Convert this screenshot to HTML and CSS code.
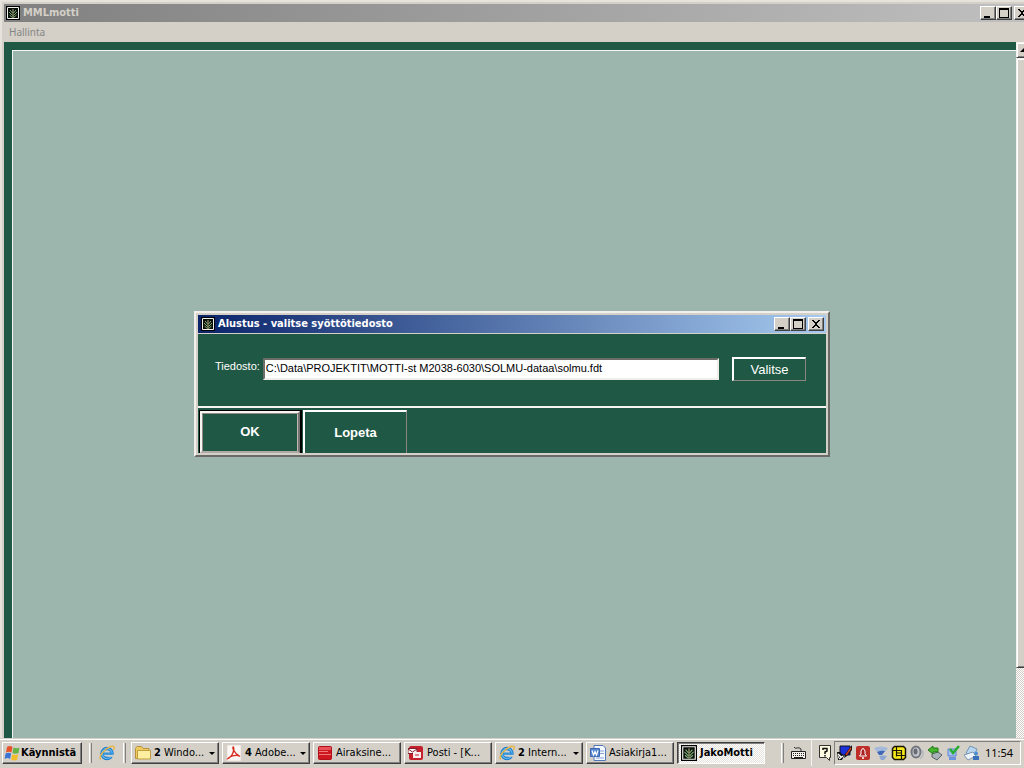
FILE: index.html
```html
<!DOCTYPE html>
<html lang="fi">
<head>
<meta charset="utf-8">
<title>MMLmotti</title>
<meta name="viewport" content="width=device-width, initial-scale=1">
<link rel="stylesheet" href="styles.css">
</head>
<body>
<svg class="defs" aria-hidden="true">
  <symbol id="leaf" viewBox="0 0 14 14">
    <path d="M0 0h14v14H0z" fill="#000"/>
    <path d="M1.500 1.500h11v11h-11z" fill="#0a0f0a" stroke="#f0f0ea"/>
    <path d="M7 3v9" stroke="#b0a878"/>
    <path d="M4 4l2.500 3M10 4L7.500 7M3 6l3.500 3.500M11 6L7.500 9.500M3.500 9L6.500 11.500M10.500 9L7.500 11.500" fill="none" stroke="#7fae78"/>
  </symbol>
  <symbol id="min" viewBox="0 0 10 10"><path d="M1 8h6v2H1z"/></symbol>
  <symbol id="max" viewBox="0 0 10 10"><path d="M0 0h10v10H0zM1 2v7h8V2z" fill-rule="evenodd"/></symbol>
  <symbol id="close" viewBox="0 0 10 10"><path d="M1 1h2v1h1v1h2V2h1V1h2v1H8v1H7v1H6v2h1v1h1v1h1v1H7V8H6V7H4v1H3v1H1V8h1V7h1V6h1V4H3V3H2V2H1z"/></symbol>
  <symbol id="ie" viewBox="0 0 16 16">
    <circle cx="8" cy="8.500" r="5" fill="none" stroke="#1d78c8" stroke-width="3.400"/>
    <circle cx="8" cy="8.500" r="5" fill="none" stroke="#56b4f0" stroke-width="1.600"/>
    <path d="M9 9.800h7v2H9z" fill="#d4d0c8"/>
    <path d="M4 7.500h9.500v2.300H4z" fill="#2f93e0"/>
    <path d="M2 14.500C-1.500 12 6 3.500 12 1.500c3-1 4 .5 2.500 3.500" fill="none" stroke="#e8b545" stroke-width="1.400"/>
  </symbol>
</svg>

<main class="app">
  <header class="caption caption-idle">
    <svg class="leaf"><use href="#leaf"/></svg>
    <h1 class="caption-text">MMLmotti</h1>
    <div class="caption-buttons">
      <button class="cap" type="button" aria-label="Pienennä"><svg><use href="#min"/></svg></button>
      <button class="cap" type="button" aria-label="Suurenna"><svg><use href="#max"/></svg></button>
      <button class="cap cap-close" type="button" aria-label="Sulje"><svg><use href="#close"/></svg></button>
    </div>
  </header>
  <nav class="menu"><button class="menu-item" type="button">Hallinta</button></nav>
  <div class="content">
    <div class="frame"><div class="canvas"></div></div>
    <div class="scroll">
      <button class="scroll-up" type="button" aria-label="Vieritä ylös"><svg viewBox="0 0 8 4"><path d="M4 0l4 4H0z"/></svg></button>
      <div class="thumb"></div>
    </div>
  </div>
</main>

<footer class="taskbar">
  <button class="task start" type="button">
    <svg class="ico" viewBox="0 0 16 16"><path d="M3 2q3-2 5.500 0L7.500 7.500q-2.500-1.500-5.500 0z" fill="#e9532b"/><path d="M9.500 2.500q3 1.500 6 0l-1 5.500q-3 1.500-6 0z" fill="#65b345"/><path d="M1.600 8.500q3-1.500 5.500 0l-1 5.500q-2.500-2-5.500 0z" fill="#3975d5"/><path d="M8.200 9.200q3 1.500 6 0l-1 5.500q-3 1.500-6 0z" fill="#f4bd2b"/></svg>
    <b>Käynnistä</b>
  </button>
  <span class="sep"></span>
  <button class="quick" type="button" aria-label="Internet Explorer"><svg class="ico"><use href="#ie"/></svg></button>
  <span class="sep"></span>
  <div class="tasks">
    <button class="task" type="button"><svg class="ico" viewBox="0 0 16 16"><path d="M.5 3.500L2 1.500h4.500L8 3.500h6v10H.5z" fill="#f0cc60" stroke="#b8923a"/><path d="M2.500 5.500h13v8.500h-13z" fill="#fdeea0" stroke="#c09c3d"/></svg><span class="name"><b>2</b> Windo...</span><i class="drop"></i></button>
    <button class="task" type="button"><svg class="ico" viewBox="0 0 16 16"><path d="M1 0h14v16H1z" fill="#fbf7f4" stroke="#ddcfc9" stroke-width=".6"/><path d="M2 13.500C5 13 9 6 7.500 2c-1.500-1-1 5 6.500 9.500C11 9 4 11 2 13.500z" fill="none" stroke="#d82d22" stroke-width="1.300"/></svg><span class="name"><b>4</b> Adobe...</span><i class="drop"></i></button>
    <button class="task" type="button"><svg class="ico" viewBox="0 0 16 16"><rect x="1.500" y="1.500" width="13" height="13" rx="1" fill="#cf1720" stroke="#b01018"/><path d="M2 2h12v3H2z" fill="#e8505a"/><path d="M2 6.500h9M2 9.500h12" stroke="#ee7a7a"/></svg><span class="name">Airaksine...</span></button>
    <button class="task" type="button"><svg class="ico" viewBox="0 0 16 16"><rect x="1" y="1" width="14" height="14" rx="2" fill="#c5202c"/><path d="M0 3.500h9v5H0z" fill="#fff" stroke="#812029"/><path d="M0 4l4.500 3L9 4" fill="none" stroke="#812029"/><path d="M5 7h8v6H5z" fill="#f8eeee"/><path d="M7 10h4M10 4h4" stroke="#c5202c"/></svg><span class="name">Posti - [K...</span></button>
    <button class="task" type="button"><svg class="ico"><use href="#ie"/></svg><span class="name"><b>2</b> Intern...</span><i class="drop"></i></button>
    <button class="task" type="button"><svg class="ico" viewBox="0 0 16 16"><path d="M4 .5h9l2.500 2.500v12.500H4z" fill="#f4f8ff" stroke="#5277b8"/><path d="M10 6h4M10 8.500h4M6 13h8" stroke="#83a3d8"/><path d="M.5 3.500h9v8h-9z" fill="#5a88d0" stroke="#3c66af"/><path d="M2 5.500L3.500 10 5 6.500 6.500 10 8 5.500" fill="none" stroke="#fff" stroke-width="1.200"/></svg><span class="name">Asiakirja1...</span></button>
    <button class="task active" type="button"><svg class="ico"><use href="#leaf"/></svg><b class="name">JakoMotti</b></button>
  </div>
  <div class="lang">
    <span class="sep"></span>
    <svg class="keys" viewBox="0 0 17 16"><path d="M4 2q1 2 3 1t4 1v3" fill="none" stroke="#333"/><path d="M1.500 6.500h14v7h-14z" fill="#f4f2ea" stroke="#222"/><path d="M3 8.500h11M3 10.500h11" stroke="#222" stroke-dasharray="1 1"/><path d="M4 12.500h9" stroke="#222"/></svg>
    <span class="line"></span>
    <svg class="help" viewBox="0 0 13 16"><path d="M.5 .5h11v12h-1v3l-3-3h-7z" fill="#fffbe0" stroke="#333"/><path d="M4 5V3.500h4V6L6 7v2M6 10v1.500" fill="none" stroke="#111" stroke-width="1.500"/></svg>
  </div>
  <div class="tray">
    <svg class="ico" viewBox="0 0 16 16"><path d="M3 1h10v9H3z" fill="#1a30d8" stroke="#101020"/><path d="M15 0v5l-5 6-3 2 1-4z" fill="#111"/><path d="M14 3L9 10" stroke="#d33a22" stroke-width="1.500"/><path d="M0 7h3l4 4-2 4H1z" fill="#111"/><path d="M1 9l3 3M2 14l4-3M1 12h1" stroke="#fff" stroke-width="1.500"/></svg>
    <svg class="ico" viewBox="0 0 16 16"><rect x="1" y="1" width="14" height="14" rx="2" fill="#bf2f2a"/><path d="M4.500 11L6 9V6q2-5 4 0v3l1.500 2z" fill="#a82020" stroke="#fff"/><path d="M7 13h2" stroke="#fff" stroke-width="1.500"/></svg>
    <svg class="ico" viewBox="0 0 16 16"><path d="M1 3q7-3 14 0l-3 4q-4-2-8 0z" fill="#a4b9dc"/><path d="M4 7q4-2 8-1l-3 4H6z" fill="#4068b8"/><path d="M6 11q4-1 8 0l-3 4H8z" fill="#8fa8d2"/></svg>
    <svg class="ico" viewBox="0 0 16 16"><path d="M3.500 1.500h9l2 2v9l-2 2h-9l-2-2v-9z" fill="#f8ea18" stroke="#181500" stroke-width="1.500"/><path d="M5.500 2v9.500M10.500 5v9M2 5.500h8.500M5.500 10.500H14M5.500 8h5" fill="none" stroke="#181500" stroke-width="1.200"/></svg>
    <svg class="ico" viewBox="0 0 16 16"><ellipse cx="7" cy="7" rx="4.500" ry="5.500" fill="#c4c6ca" stroke="#74777f" stroke-width="2"/><ellipse cx="6.500" cy="6.500" rx="2" ry="3" fill="#666b76"/><path d="M13 5q3 5-2 9" fill="none" stroke="#b5b8c0" stroke-width="1.500"/></svg>
    <svg class="ico" viewBox="0 0 16 16"><path d="M5 9l6-2 4 3-5 5-5-3z" fill="#a9b1b9" stroke="#596169"/><path d="M1 5l5-4v2h5v4H6v2z" fill="#45b52c" stroke="#23781a"/></svg>
    <svg class="ico" viewBox="0 0 16 16"><path d="M3 4h8v7H3z" fill="#a4c0f4" stroke="#5c82d0"/><path d="M4 13.500h7" stroke="#6d94e0" stroke-width="3"/><path d="M5 4l3 4 6-7" fill="none" stroke="#27ad31" stroke-width="2.500"/></svg>
    <svg class="ico" viewBox="0 0 16 16"><path d="M3 8L7 1l7 3-3 7z" fill="#b9d5ef" stroke="#7195b7"/><path d="M1 10l9-3 3 4-8 4z" fill="#eef3f7" stroke="#7b98b2"/><circle cx="13" cy="8.500" r="2" fill="#4d8ed0"/><path d="M10 11h6v4h-6z" fill="#3972ba"/></svg>
    <time class="clock">11:54</time>
  </div>
</footer>

<div class="overlay">
  <form class="dialog" role="dialog" aria-labelledby="dialog-title">
    <header class="caption caption-live">
      <svg class="leaf"><use href="#leaf"/></svg>
      <h2 class="caption-text" id="dialog-title">Alustus - valitse syöttötiedosto</h2>
      <div class="caption-buttons">
        <button class="cap" type="button" aria-label="Pienennä"><svg><use href="#min"/></svg></button>
        <button class="cap" type="button" aria-label="Suurenna"><svg><use href="#max"/></svg></button>
        <button class="cap cap-close" type="button" aria-label="Sulje"><svg><use href="#close"/></svg></button>
      </div>
    </header>
    <div class="fields">
      <label class="label" for="file">Tiedosto:</label>
      <input class="file" id="file" type="text" value="C:\Data\PROJEKTIT\MOTTI-st M2038-6030\SOLMU-dataa\solmu.fdt">
      <button class="pick" type="button">Valitse</button>
    </div>
    <div class="actions">
      <button class="action ok" type="submit"><span class="ok-face">OK</span></button>
      <button class="action quit" type="button">Lopeta</button>
    </div>
  </form>
</div>
</body>
</html>
```
FILE: styles.css
```css
:root {
  --face: #d4d0c8;
  --green: #1f5844;
  --sage: #9db6ad;
  --shade: #808080;
  --dark: #404040;
}

* { box-sizing: border-box; }

body {
  margin: 0;
  height: 100vh;
  overflow: hidden;
  display: flex;
  flex-direction: column;
  background: var(--face);
  color: #000;
  font: 11px/14px "DejaVu Sans Condensed", "DejaVu Sans", sans-serif;
}

button, input { font: inherit; color: inherit; margin: 0; border-radius: 0; }
button { padding: 0; border: 0; background: none; }
svg { display: block; flex: none; }
.defs { width: 0; height: 0; position: absolute; }

/* The maximised window runs past the right edge of the screen */
.app {
  flex: 1;
  min-height: 0;
  width: calc(100% + 12px);
  display: flex;
  flex-direction: column;
  padding: 2px 4px 0 2px;
  border-left: 2px solid #e6e3dd;
  border-top: 2px solid #e6e3dd;
}

.caption { display: flex; align-items: center; gap: 3px; height: 18px; padding: 0 2px 0 3px; flex: none; }
.caption-idle { padding-left: 2px; background: linear-gradient(90deg, #808080, #c0c0c0); color: var(--face); }
.caption-live { background: linear-gradient(90deg, #0a246a, #a6caf0); color: #fff; }
.leaf { width: 14px; height: 14px; }
.caption-text { margin: 0; flex: 1; font-size: 11px; line-height: 14px; font-weight: bold; white-space: nowrap; }
.caption-buttons { display: flex; }

.cap {
  width: 16px;
  height: 14px;
  display: grid;
  place-items: center;
  background: var(--face);
  border: 1px solid;
  border-color: #fff var(--dark) var(--dark) #fff;
  box-shadow: inset -1px -1px var(--shade);
}
.cap svg { width: 10px; height: 10px; }
.cap-close { margin-left: 2px; }

.menu { height: 20px; flex: none; padding: 3px 5px; }
.menu-item { color: #858585; font-family: "Noto Sans", sans-serif; font-size: 10px; line-height: 14px; display: block; }

.content { flex: 1; min-height: 0; display: flex; }
.frame { flex: 1; display: flex; padding: 8px 0 0 8px; background: var(--green); }
.canvas { flex: 1; background: var(--sage); border-left: 1px solid #f4f8f4; border-top: 1px solid #f4f8f4; }

.scroll {
  width: 16px;
  display: flex;
  flex-direction: column;
  background: repeating-conic-gradient(#fff 0 25%, #d4d0c8 0 50%) 0 0 / 2px 2px;
}
.scroll-up, .thumb {
  background: var(--face);
  border: 1px solid;
  border-color: #f4f2ee var(--dark) var(--dark) #f4f2ee;
  box-shadow: inset 1px 1px #fff, inset -1px -1px var(--shade);
}
.scroll-up { height: 16px; display: grid; place-items: center; }
.scroll-up svg { width: 8px; height: 4px; }
.thumb { height: 90%; max-height: calc(100% - 86px); }

.taskbar {
  flex: none;
  height: 30px;
  display: flex;
  align-items: center;
  padding: 0 3px 0 2px;
  background: var(--face);
  box-shadow: inset 0 1px var(--face), inset 0 2px #fff;
}
.task {
  height: 22px;
  flex: 0 1 88px;
  min-width: 0;
  display: flex;
  align-items: center;
  gap: 3px;
  padding: 0 3px;
  text-align: left;
  white-space: nowrap;
  background: var(--face);
  border: 1px solid;
  border-color: #fff var(--dark) var(--dark) #fff;
  box-shadow: inset -1px -1px var(--shade);
}
.name { flex: 1; }
.start { flex: 0 0 80px; padding: 0 1px; gap: 1px; }
.ico { width: 16px; height: 16px; }
.sep { width: 3px; height: 20px; margin: 0 7px; border-left: 1px solid #fff; border-right: 1px solid var(--shade); flex: none; }
.quick { padding: 0; }
.quick + .sep { margin: 0 5px 0 8px; }
.tasks { flex: 1; min-width: 0; display: flex; gap: 3px; }
.drop { border: 3px solid transparent; border-top-color: #000; border-bottom: 0; flex: none; }
.active {
  border-color: var(--dark) #fff #fff var(--dark);
  box-shadow: inset 1px 1px var(--shade);
  background: repeating-conic-gradient(#fff 0 25%, #e4e1dc 0 50%) 0 0 / 2px 2px;
}
.lang { display: flex; align-items: center; }
.lang .sep { margin: 0 6px 0 0; }
.keys { width: 17px; height: 16px; }
.line { width: 1px; height: 26px; margin: 0 7px 0 4px; background: #f6f4f0; }
.help { width: 13px; height: 16px; }
.tray {
  height: 24px;
  display: flex;
  align-items: center;
  gap: 2px;
  margin-left: 2px;
  padding: 0 7px 0 2px;
  border: 1px solid;
  border-color: var(--shade) #fff #fff var(--shade);
}
.clock { margin-left: 4px; font-family: "Noto Sans", sans-serif; }

.overlay { position: fixed; inset: 0; display: grid; place-items: center; pointer-events: none; }
.dialog {
  width: 636px;
  max-width: 100%;
  pointer-events: auto;
  padding: 2px;
  background: var(--face);
  border: 2px solid;
  border-color: #f2f0ec #6a6a66 #6a6a66 #f2f0ec;
}
.fields {
  display: flex;
  align-items: center;
  height: 72px;
  margin-top: 1px;
  padding: 0 20px 2px 17px;
  background: var(--green);
  color: #fff;
  font-family: "Liberation Sans", Arial, sans-serif;
}
.label { padding-bottom: 6px; margin-right: 3px; }
.file {
  flex: 1;
  min-width: 0;
  height: 22px;
  padding: 0 1px 2px;
  color: #000;
  background: #fff;
  border: 2px solid;
  border-color: #6c6c68 #f0eeea #f0eeea #6c6c68;
}
.pick {
  width: 74px;
  height: 24px;
  margin-left: 13px;
  font-size: 13px;
  line-height: 16px;
  border: 2px solid;
  border-color: #fff #8b8581 #8b8581 #fff;
  border-right-width: 1px;
  border-bottom-width: 1px;
}
.actions {
  display: flex;
  gap: 1px;
  height: 47px;
  padding: 2px 0 0 1px;
  border-top: 2px solid #f4f4f0;
  background: var(--green);
  color: #fff;
  font: bold 13px/16px "Liberation Sans", Arial, sans-serif;
}
.action { height: 43px; }
.ok { width: 103px; border: 1px solid #000; border-bottom: 0; border-right-width: 2px; display: flex; }
.ok-face {
  flex: 1;
  display: grid;
  place-items: center;
  border: 2px solid;
  border-color: #f4f4f0 #747470 #b0aaa6 #f4f4f0;
  box-shadow: inset 1px 1px #928884, inset -1px 0 #c0b8b4;
}
.quit { width: 104px; border: 2px solid; border-color: #fff #8b8581 transparent #fff; border-right-width: 1px; border-bottom: 0; }
```
